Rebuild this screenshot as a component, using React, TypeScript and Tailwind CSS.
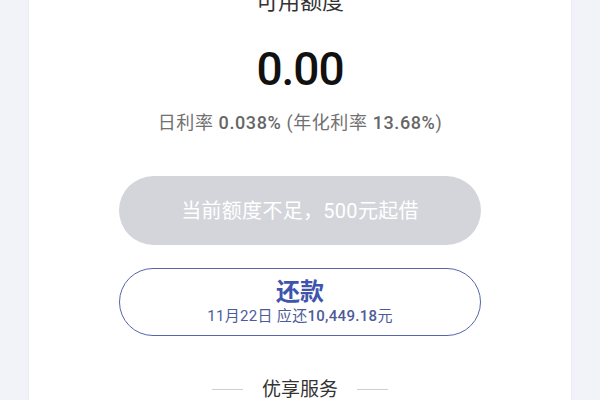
export default function App() {
  return (
    <div
      className="flex h-[400px] w-[600px] justify-center overflow-hidden bg-[#f2f3f8] px-[29px]"
      style={{ fontFamily: "Roboto, 'Noto Sans CJK SC', sans-serif" }}
    >
      <div className="flex w-full flex-col items-center bg-white shadow-[0_0_3px_rgba(0,0,0,0.06)]">
        <div className="mt-[-9px] text-[22px] leading-none text-[#333]">可用额度</div>
        <div className="mt-[33px] text-[46px] font-medium leading-none tracking-[-1px] text-[#111]">
          0.00
        </div>
        <div className="mt-[20px] text-[18px] leading-[21px] tracking-[0.6px] text-[#707070]">
          日利率 <span className="font-medium text-[#666]">0.038%</span> (年化利率{" "}
          <span className="font-medium text-[#666]">13.68%</span>)
        </div>
        <button
          type="button"
          className="mt-[43px] flex h-[69px] w-[362px] items-center justify-center rounded-full bg-[#d4d5db] text-[20px] tracking-[0.3px] text-white"
        >
          当前额度不足，500元起借
        </button>
        <button
          type="button"
          className="mt-[23px] flex h-[68px] w-[362px] flex-col items-center justify-center rounded-full border-[1.5px] border-[#5566a8]"
        >
          <span className="text-[24px] font-bold leading-[27px] text-[#3f55ad]">还款</span>
          <span className="mt-[1px] text-[15px] leading-[18px] tracking-[0.3px] text-[#4d5c99]">
            11月22日 应还<span className="font-medium">10,449.18</span>元
          </span>
        </button>
        <div className="mt-[44px] flex items-center gap-[19px]">
          <span className="h-px w-[31px] bg-[#cfcfcf]" />
          <span className="text-[19px] leading-none text-[#333]">优享服务</span>
          <span className="h-px w-[31px] bg-[#cfcfcf]" />
        </div>
      </div>
    </div>
  );
}
